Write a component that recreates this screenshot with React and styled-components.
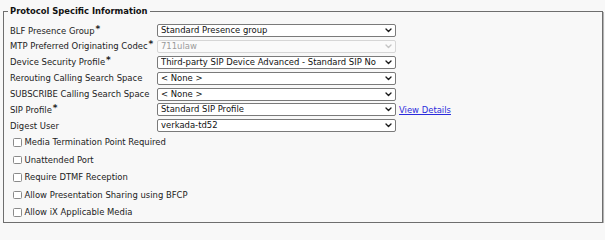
import React from 'react';
import styled, { createGlobalStyle } from 'styled-components';

const GlobalStyle = createGlobalStyle`
  html, body {
    margin: 0;
    padding: 0;
    background: #f8f8f8;
  }
  body {
    font-family: "DejaVu Sans", Verdana, sans-serif;
    font-size: 8.45px;
    color: #222;
  }
`

const fields = [
  { label: 'BLF Presence Group', required: true, value: 'Standard Presence group' },
  { label: 'MTP Preferred Originating Codec', required: true, value: '711ulaw', disabled: true },
  { label: 'Device Security Profile', required: true, value: 'Third-party SIP Device Advanced - Standard SIP Non-Secure Profile' },
  { label: 'Rerouting Calling Search Space', value: '< None >' },
  { label: 'SUBSCRIBE Calling Search Space', value: '< None >' },
  { label: 'SIP Profile', required: true, value: 'Standard SIP Profile', link: 'View Details' },
  { label: 'Digest User', value: 'verkada-td52' },
];

const checks = [
  'Media Termination Point Required',
  'Unattended Port',
  'Require DTMF Reception',
  'Allow Presentation Sharing using BFCP',
  'Allow iX Applicable Media',
];

const Chevron = ({ disabled }) => (
  <ChevronIcon viewBox="0 0 8 6" $disabled={disabled}>
    <path d="M1 1.2 L4 4.2 L7 1.2" fill="none" strokeWidth="1.6" strokeLinecap="round" strokeLinejoin="round" />
  </ChevronIcon>
);

export default function App() {
  return (
    <>
      <GlobalStyle />
      <Fieldset>
        <Legend>Protocol Specific Information</Legend>
        <FieldGrid>
          {fields.map(f => (
            <Row key={f.label}>
              <Label>
                {f.label}
                {f.required && <Star>*</Star>}
              </Label>
              <SelectWrap>
                <Select disabled={f.disabled} defaultValue={f.value}>
                  <option>{f.value}</option>
                </Select>
                <Chevron disabled={f.disabled} />
              </SelectWrap>
              {f.link && <Link href="#">{f.link}</Link>}
            </Row>
          ))}
        </FieldGrid>
        <CheckList>
          {checks.map(c => (
            <CheckRow key={c}>
              <Box type="checkbox" />
              <span>{c}</span>
            </CheckRow>
          ))}
        </CheckList>
      </Fieldset>
    </>
  )
}

const Fieldset = styled.fieldset`
  box-sizing: border-box;
  width: 600px;
  margin: 6px 0 0 3px;
  padding: 0 4px 5px 4px;
  border: 1px solid #6e6e6e;
  box-shadow: 1px 1px 0 #b4b4b4;
`
const Legend = styled.legend`
  padding: 0 2px;
  font-weight: bold;
  font-size: 8.4px;
  color: #111;
  line-height: 10px;
`
const FieldGrid = styled.div`
  display: flex;
  flex-direction: column;
  gap: 2.9px;
  padding: 8px 0 0 2px;
`
const Row = styled.div`
  display: flex;
  align-items: center;
  height: 13px;
`
const Label = styled.div`
  width: 147px;
  flex: none;
  white-space: nowrap;
  color: #222;
`
const Star = styled.sup`
  font-weight: bold;
  font-size: 9px;
  line-height: 0;
  vertical-align: 2px;
  margin-left: 1px;
`
const SelectWrap = styled.div`
  position: relative;
  width: 239px;
  height: 13px;
  flex: none;
`
const Select = styled.select`
  appearance: none;
  box-sizing: border-box;
  width: 100%;
  height: 100%;
  margin: 0;
  padding: 0 19px 0 3px;
  border: 1px solid #7a7a7a;
  border-radius: 2px;
  background: #fff;
  font-family: inherit;
  font-size: 8.45px;
  color: #111;
  line-height: 11px;
  text-overflow: clip;

  &:disabled {
    border-color: #d6d6d6;
    color: #9a9a9a;
    background: #fafafa;
    opacity: 1;
  }
`
const ChevronIcon = styled.svg`
  position: absolute;
  right: 4px;
  top: 4px;
  width: 7px;
  height: 5px;
  stroke: ${p => (p.$disabled ? '#c4c4c4' : '#1a1a1a')};
  pointer-events: none;
`
const Link = styled.a`
  margin-left: 3px;
  color: #2b2bdc;
  text-decoration: underline;
  white-space: nowrap;
`
const CheckList = styled.div`
  display: flex;
  flex-direction: column;
  gap: 7.5px;
  padding: 5px 0 0 5px;
`
const CheckRow = styled.label`
  display: flex;
  align-items: center;
  gap: 3px;
  height: 10px;
`
const Box = styled.input`
  appearance: none;
  box-sizing: border-box;
  width: 8.5px;
  height: 8.5px;
  margin: 0;
  border: 1px solid #8a8a8a;
  border-radius: 1.5px;
  background: #fff;
`
